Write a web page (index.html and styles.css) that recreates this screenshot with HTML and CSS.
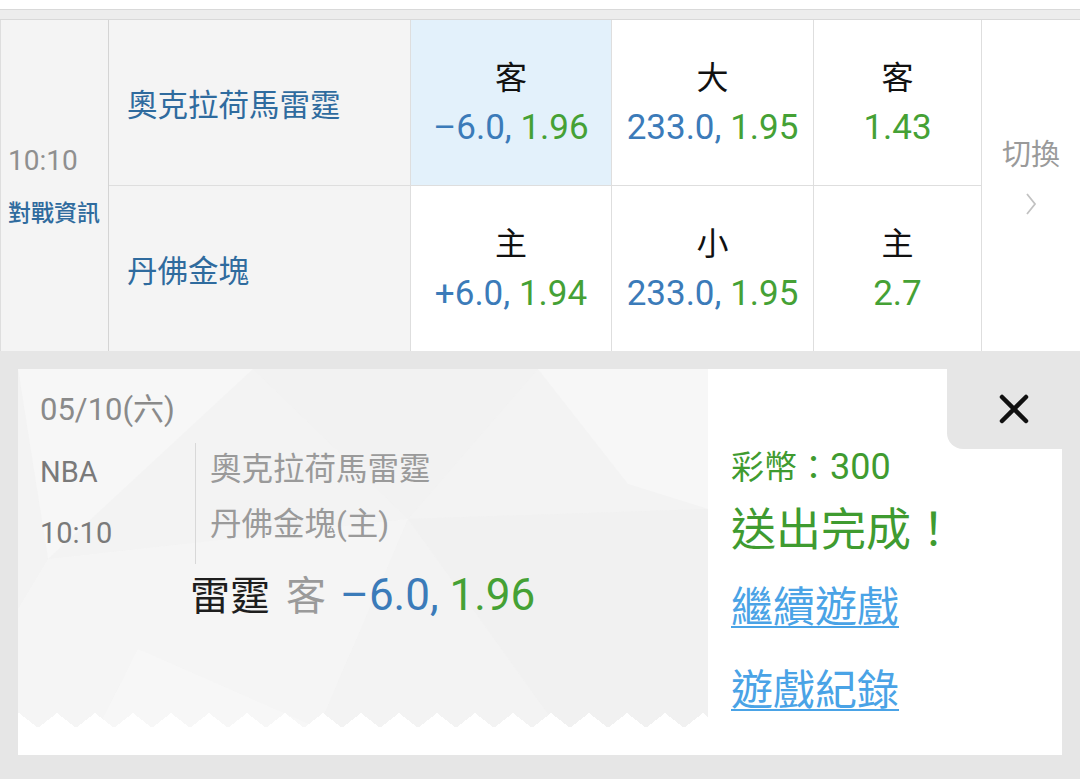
FILE: index.html
```html
<!DOCTYPE html>
<html lang="zh-Hant">
<head>
    <meta charset="UTF-8" />
    <meta name="viewport" content="width=device-width, initial-scale=1.0" />
    <title>投注單</title>
    <link rel="stylesheet" href="styles.css">
</head>
<body>
    <div class="topbar"></div>
    <div class="subbar"></div>

    <div class="match">
        <div class="time-cell">
            <div class="time">10:10</div>
            <a class="info">對戰資訊</a>
        </div>
        <div class="team">奧克拉荷馬雷霆</div>
        <div class="odds odds-picked">
            <span class="side">客</span>
            <span class="val"><span class="line">–6.0,</span> <span class="price">1.96</span></span>
        </div>
        <div class="odds">
            <span class="side">大</span>
            <span class="val"><span class="line">233.0,</span> <span class="price">1.95</span></span>
        </div>
        <div class="odds">
            <span class="side">客</span>
            <span class="val"><span class="price">1.43</span></span>
        </div>
        <div class="switch-cell">
            <span>切換</span>
            <svg class="chevron" width="14" height="26" viewBox="0 0 14 26">
                <path d="M3 3 L11 13 L3 23" fill="none" stroke="#c2c2c2" stroke-width="1.8" />
            </svg>
        </div>
        <div class="team team-home">丹佛金塊</div>
        <div class="odds odds-home">
            <span class="side">主</span>
            <span class="val"><span class="line">+6.0,</span> <span class="price">1.94</span></span>
        </div>
        <div class="odds odds-home">
            <span class="side">小</span>
            <span class="val"><span class="line">233.0,</span> <span class="price">1.95</span></span>
        </div>
        <div class="odds odds-home">
            <span class="side">主</span>
            <span class="val"><span class="price">2.7</span></span>
        </div>
    </div>

    <div class="slip-wrap">
        <div class="slip">
            <div class="ticket">
                <div class="ticket-body">
                    <svg class="ticket-bg" width="690" height="359" viewBox="0 0 690 359">
                        <polygon points="0,0 235,0 30,190" fill="#f8f8f8" opacity="0.7" />
                        <polygon points="235,0 520,0 390,150" fill="#efefef" opacity="0.4" />
                        <polygon points="520,0 690,0 690,140 610,115" fill="#f8f8f8" opacity="0.8" />
                        <polygon points="30,190 390,150 300,359 0,359 0,240" fill="#f6f6f6" opacity="0.6" />
                        <polygon points="390,150 690,140 690,359 540,359" fill="#f0f0f0" opacity="0.5" />
                        <polygon points="120,280 300,359 80,359" fill="#f8f8f8" opacity="0.7" />
                    </svg>
                    <div class="date">05/10(六)</div>
                    <div class="game">
                        <div class="game-meta">
                            <div>NBA</div>
                            <div>10:10</div>
                        </div>
                        <div class="game-teams">
                            <div>奧克拉荷馬雷霆</div>
                            <div>丹佛金塊(主)</div>
                        </div>
                    </div>
                    <div class="bet">
                        <span class="bet-team">雷霆</span><span class="bet-side">客</span><span class="bet-val"><span class="line">–6.0,</span> <span class="price">1.96</span></span>
                    </div>
                </div>
            </div>
            <div class="result">
                <div class="coins">彩幣：<span class="coins-num">300</span></div>
                <div class="done">送出完成！</div>
                <a class="link link-first">繼續遊戲</a>
                <a class="link">遊戲紀錄</a>
            </div>
            <button class="close" aria-label="關閉">
                <svg width="30" height="30" viewBox="0 0 30 30">
                    <path d="M3 3 L27 27 M27 3 L3 27" stroke="#111" stroke-width="4.5" stroke-linecap="round" />
                </svg>
            </button>
        </div>
    </div>
</body>
</html>
```

FILE: styles.css
```css
:root {
    --border-color: #dedede;
    --team-blue: #2f6b9e;
    --line-blue: #3b7bb9;
    --price-green: #45a135;
    --link-blue: #4aa3e6;
    --page-gray: #e6e6e6;
}

* {
    box-sizing: border-box;
}

body {
    margin: 0;
    width: 1080px;
    height: 779px;
    overflow: hidden;
    background-color: var(--page-gray);
    font-family: Roboto, "Noto Sans CJK TC", sans-serif;
    color: #222;
}

.topbar {
    height: 10px;
    background-color: #fff;
    border-bottom: 1px solid #d9d9d9;
}

.subbar {
    height: 10px;
    background-color: #ededed;
    border-bottom: 1px solid #d9d9d9;
}

/* match row */
.match {
    display: grid;
    grid-template-columns: 109px 302px 201px 202px 168px 98px;
    grid-template-rows: 166px 165px;
    background-color: #fff;
}

.time-cell {
    grid-row: 1 / 3;
    display: flex;
    flex-direction: column;
    justify-content: center;
    padding-left: 7px;
    background-color: #f4f4f4;
    border-left: 1px solid var(--border-color);
    border-right: 1px solid #d4d4d4;
}

.time {
    font-size: 28px;
    line-height: 36px;
    color: #8f8f8f;
}

.info {
    margin-top: 20px;
    font-size: 23px;
    line-height: 30px;
    font-weight: 500;
    color: var(--team-blue);
}

.team {
    display: flex;
    align-items: center;
    padding-left: 18px;
    font-size: 30.5px;
    color: var(--team-blue);
    background-color: #f4f4f4;
    border-right: 1px solid var(--border-color);
    border-bottom: 1px solid var(--border-color);
}

.team-home {
    border-bottom: none;
}

.odds {
    display: flex;
    flex-direction: column;
    align-items: center;
    justify-content: center;
    border-right: 1px solid var(--border-color);
    border-bottom: 1px solid var(--border-color);
}

.odds-home {
    border-bottom: none;
}

.odds-picked {
    background-color: #e3f1fb;
}

.side {
    font-size: 32px;
    line-height: 50px;
    color: #111;
}

.val {
    font-size: 35px;
    line-height: 50px;
    white-space: nowrap;
}

.line {
    color: var(--line-blue);
}

.price {
    color: var(--price-green);
}

.switch-cell {
    grid-row: 1 / 3;
    grid-column: 6;
    display: flex;
    flex-direction: column;
    align-items: center;
    padding-top: 117px;
    font-size: 29px;
    line-height: 36px;
    color: #9a9a9a;
}

.chevron {
    margin-top: 18px;
}

/* bet slip */
.slip-wrap {
    padding: 18px 18px 0;
}

.slip {
    position: relative;
    display: flex;
    height: 386px;
    background-color: #fff;
}

.ticket {
    width: 690px;
}

.ticket-body {
    position: relative;
    height: 359px;
    padding: 21px 0 0 22px;
    background-color: #f3f3f3;
}

.ticket-body::after {
    content: "";
    position: absolute;
    left: 0;
    right: 0;
    bottom: 0;
    height: 15px;
    background: conic-gradient(from 128deg at 50% 0, #fff 0deg 104deg, transparent 104deg) -18px 0 / 38px 15px repeat-x;
}

.ticket-bg {
    position: absolute;
    top: 0;
    left: 0;
}

.date {
    position: relative;
    font-size: 31px;
    line-height: 40px;
    color: #8a8a8a;
}

.game {
    position: relative;
    display: flex;
    margin-top: 12px;
}

.game-meta {
    width: 155px;
    font-size: 29px;
    line-height: 61px;
    color: #7a7a7a;
}

.game-teams {
    margin-top: 1px;
    padding-left: 14px;
    border-left: 1px solid #d8d8d8;
    font-size: 31.5px;
    line-height: 54.5px;
    color: #9a9a9a;
}

.bet {
    position: relative;
    margin: 6px 0 0 150px;
    font-size: 40px;
    line-height: 50px;
    white-space: nowrap;
}

.bet-team {
    color: #1e1e1e;
    margin-right: 16px;
}

.bet-side {
    color: #9a9a9a;
    margin-right: 14px;
}

.bet-val {
    font-size: 44px;
}

.result {
    flex: 1;
    display: flex;
    flex-direction: column;
    align-items: flex-start;
    padding: 76px 0 0 23px;
}

.coins {
    font-size: 33px;
    line-height: 44px;
    color: #3f9b30;
}

.coins-num {
    font-size: 36px;
}

.done {
    margin-top: 13px;
    font-size: 45px;
    line-height: 56px;
    color: #3f9b30;
}

.link {
    font-size: 42px;
    line-height: 56px;
    color: var(--link-blue);
    text-decoration: underline;
    text-underline-offset: 4px;
    text-decoration-thickness: 2px;
    cursor: pointer;
}

.link-first {
    margin-top: 21px;
    margin-bottom: 27px;
}

.close {
    position: absolute;
    top: 0;
    right: 0;
    width: 115px;
    height: 80px;
    display: flex;
    align-items: center;
    justify-content: center;
    padding: 0 0 0 19px;
    border: none;
    border-bottom-left-radius: 16px;
    background-color: var(--page-gray);
    cursor: pointer;
}
```
